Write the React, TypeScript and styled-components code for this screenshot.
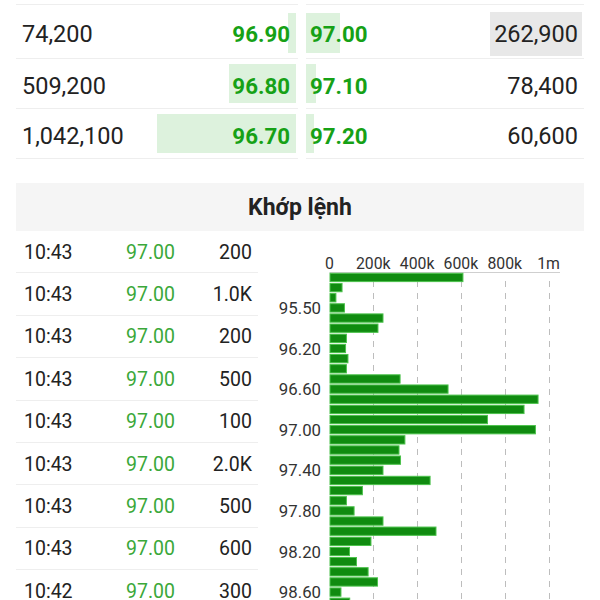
import React from "react";
import styled, { createGlobalStyle } from "styled-components";

const Global = createGlobalStyle`
  html, body { margin: 0; padding: 0; background: #ffffff; }
  body {
    font-family: Roboto, "Noto Sans", "Liberation Sans", sans-serif;
    color: #222222;
    width: 600px;
    height: 600px;
    overflow: hidden;
  }
`;

const Page = styled.div`
  padding: 0 16px;
  width: 568px;
`;

const Book = styled.div`
  display: flex;
  flex-direction: column;
`;

const BookRow = styled.div<{ $h: number }>`
  display: grid;
  grid-template-columns: 282px 278px;
  column-gap: 8px;
  height: ${(p) => p.$h}px;
`;

const BidCell = styled.div`
  position: relative;
  display: flex;
  align-items: center;
  justify-content: space-between;
  padding: 4px 8px 0 6px;
  border-bottom: 1px solid #eeeeee;
`;

const AskCell = styled.div`
  position: relative;
  display: flex;
  align-items: center;
  justify-content: space-between;
  padding: 4px 2px 0 4px;
  border-bottom: 1px solid #eeeeee;
`;

const CutCell = styled.div`
  border-bottom: 1px solid #eeeeee;
`;

const DepthBar = styled.div<{ $side: "bid" | "ask"; $top: number }>`
  position: absolute;
  top: ${(p) => p.$top}px;
  bottom: 5px;
  ${(p) => (p.$side === "bid" ? "right: 2px;" : "left: 0;")}
  background: #ddf2dd;
  z-index: 0;
`;

const Volume = styled.span<{ $hl?: boolean }>`
  position: relative;
  z-index: 1;
  font-size: 23.5px;
  color: #222222;
  padding: 8px 4px 8px;
  background: ${(p) => (p.$hl ? "#e8e8e8" : "transparent")};
`;

const BidVolume = styled.span`
  position: relative;
  z-index: 1;
  font-size: 23.5px;
  color: #222222;
`;

const BookPrice = styled.span`
  position: relative;
  z-index: 1;
  font-size: 22.3px;
  font-weight: 700;
  color: #16a116;
`;

const Header = styled.div`
  margin-top: 24px;
  height: 48px;
  background: #f5f5f5;
  display: flex;
  align-items: center;
  justify-content: center;
  font-size: 23px;
  font-weight: 700;
  color: #222222;
`;

const Body = styled.div`
  display: grid;
  grid-template-columns: 242px 314px;
  column-gap: 12px;
`;

const TradeList = styled.div`
  display: flex;
  flex-direction: column;
`;

const TradeRow = styled.div`
  display: grid;
  grid-template-columns: 102px 1fr auto;
  align-items: center;
  height: 42.4px;
  box-sizing: border-box;
  padding: 1px 6px 0 8px;
  border-bottom: 1px solid #eeeeee;
  font-size: 19.5px;
  flex-shrink: 0;
`;

const Time = styled.span`
  color: #222222;
`;

const TradePrice = styled.span`
  color: #3aa83a;
`;

const TradeVol = styled.span`
  color: #222222;
  text-align: right;
`;

const ChartBox = styled.div`
  height: 369px;
  overflow: hidden;
`;

const bookRows = [
  { bidVol: "74,200", bid: "96.90", bidBar: 8, ask: "97.00", askBar: 34, askVol: "262,900", hl: true, h: 54, top: 8 },
  { bidVol: "509,200", bid: "96.80", bidBar: 67, ask: "97.10", askBar: 10, askVol: "78,400", hl: false, h: 50, top: 5 },
  { bidVol: "1,042,100", bid: "96.70", bidBar: 139, ask: "97.20", askBar: 8, askVol: "60,600", hl: false, h: 50, top: 5 },
];

const trades = [
  ["10:43", "97.00", "200"],
  ["10:43", "97.00", "1.0K"],
  ["10:43", "97.00", "200"],
  ["10:43", "97.00", "500"],
  ["10:43", "97.00", "100"],
  ["10:43", "97.00", "2.0K"],
  ["10:43", "97.00", "500"],
  ["10:43", "97.00", "600"],
  ["10:42", "97.00", "300"],
];

// volumes in thousands
const volumes = [
  607, 55, 27, 66, 242, 219, 75, 71, 82, 75, 320, 539, 950, 886, 719, 938,
  342, 315, 322, 242, 457, 148, 75, 110, 242, 484, 187, 89, 121, 174, 217, 50, 90,
];
const priceLabels = ["95.50", "96.20", "96.60", "97.00", "97.40", "97.80", "98.20", "98.60"];
const ticks = [
  { v: 0, label: "0" },
  { v: 200, label: "200k" },
  { v: 400, label: "400k" },
  { v: 600, label: "600k" },
  { v: 800, label: "800k" },
  { v: 1000, label: "1m" },
];

const X0 = 59.5;
const SCALE = 219 / 1000;
const Y0 = 42.3;
const STEP = 10.15;
const BAR_H = 8.3;

function VolumeChart() {
  return (
    <svg width={314} height={369} viewBox="0 0 314 369" style={{ display: "block" }}>
      {ticks.slice(1).map((t) => {
        const x = Math.round(X0 + t.v * SCALE) + 0.5;
        return (
          <line key={t.label} x1={x} x2={x} y1={50} y2={369} stroke="#bdbdbd" strokeWidth={1} strokeDasharray="6 6" />
        );
      })}
      <line x1={X0} x2={290} y1={41.5} y2={41.5} stroke="#cfcfcf" strokeWidth={1} />
      {ticks.map((t) => (
        <text
          key={t.label}
          x={X0 + t.v * SCALE}
          y={37.5}
          textAnchor="middle"
          fontFamily="Roboto, sans-serif"
          fontSize={15.8}
          fill="#333333"
        >
          {t.label}
        </text>
      ))}
      {volumes.map((v, i) => (
        <rect
          key={i}
          x={X0 + 0.5}
          y={Y0 + i * STEP}
          width={v * SCALE}
          height={BAR_H}
          fill="#108b10"
          stroke="#4cc24c"
          strokeWidth={1}
        />
      ))}
      {priceLabels.map((p, k) => {
        const i = k * 4 + 3;
        return (
          <text
            key={p}
            x={51}
            y={Y0 + i * STEP + BAR_H / 2 + 6}
            textAnchor="end"
            fontFamily="Roboto, sans-serif"
            fontSize={16.8}
            fill="#333333"
          >
            {p}
          </text>
        );
      })}
    </svg>
  );
}

export default function App() {
  return (
    <>
      <Global />
      <Page>
        <Book>
          <BookRow $h={5}>
            <CutCell />
            <CutCell />
          </BookRow>
          {bookRows.map((r) => (
            <BookRow key={r.bid} $h={r.h}>
              <BidCell>
                <DepthBar $side="bid" $top={r.top} style={{ width: r.bidBar }} />
                <BidVolume>{r.bidVol}</BidVolume>
                <BookPrice>{r.bid}</BookPrice>
              </BidCell>
              <AskCell>
                <DepthBar $side="ask" $top={r.top} style={{ width: r.askBar }} />
                <BookPrice>{r.ask}</BookPrice>
                <Volume $hl={r.hl}>{r.askVol}</Volume>
              </AskCell>
            </BookRow>
          ))}
        </Book>
        <Header>Khớp lệnh</Header>
        <Body>
          <TradeList>
            {trades.map((t, i) => (
              <TradeRow key={i}>
                <Time>{t[0]}</Time>
                <TradePrice>{t[1]}</TradePrice>
                <TradeVol>{t[2]}</TradeVol>
              </TradeRow>
            ))}
          </TradeList>
          <ChartBox>
            <VolumeChart />
          </ChartBox>
        </Body>
      </Page>
    </>
  );
}
